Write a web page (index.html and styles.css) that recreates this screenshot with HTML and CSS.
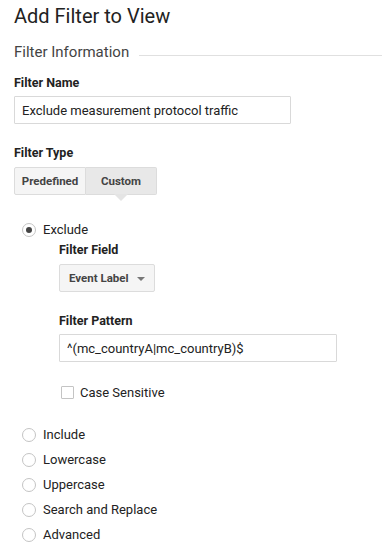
FILE: index.html
```html
<!DOCTYPE html>
<html lang="en">
<head>
  <meta charset="UTF-8" />
  <title>Add Filter to View</title>
  <link rel="stylesheet" href="styles.css">
</head>
<body>

  <h1 class="page-title">Add Filter to View</h1>

  <!-- Section header -->
  <div class="section-head">
    <span>Filter Information</span>
    <div class="section-rule"></div>
  </div>

  <div class="field-label">Filter Name</div>
  <input class="text-input name-input" type="text" value="Exclude measurement protocol traffic" />

  <div class="field-label type-label">Filter Type</div>
  <div class="btn-group">
    <button class="seg-btn">Predefined</button>
    <button class="seg-btn active">Custom</button>
  </div>

  <!-- Custom filter options -->
  <div class="option-list">
    <div class="option first">
      <span class="radio checked"></span>
      <span>Exclude</span>
    </div>

    <div class="sub-form">
      <div class="field-label sub-first">Filter Field</div>
      <div class="select-box">
        <span>Event Label</span>
        <span class="caret"></span>
      </div>

      <div class="field-label pattern-label">Filter Pattern</div>
      <input class="text-input pattern-input" type="text" value="^(mc_countryA|mc_countryB)$" />

      <div class="check-row">
        <span class="checkbox"></span>
        <span>Case Sensitive</span>
      </div>
    </div>

    <div class="option spaced">
      <span class="radio"></span>
      <span>Include</span>
    </div>
    <div class="option">
      <span class="radio"></span>
      <span>Lowercase</span>
    </div>
    <div class="option">
      <span class="radio"></span>
      <span>Uppercase</span>
    </div>
    <div class="option">
      <span class="radio"></span>
      <span>Search and Replace</span>
    </div>
    <div class="option">
      <span class="radio"></span>
      <span>Advanced</span>
    </div>
  </div>

</body>
</html>
```

FILE: styles.css
```css
/* Reset */
* { margin: 0; padding: 0; box-sizing: border-box; }

body {
  font-family: Roboto, 'Liberation Sans', sans-serif;
  color: #222;
  background: #fff;
  padding: 0 0 0 14px;
  font-size: 13px;
  overflow: hidden;
}

.page-title {
  font-size: 20px;
  font-weight: normal;
  line-height: 24px;
  padding-top: 4px;
  color: #222;
}

/* Section header with rule */
.section-head {
  display: flex;
  align-items: center;
  margin-top: 14px;
  font-size: 15px;
  line-height: 20px;
  color: #444;
}
.section-rule {
  flex: 1;
  margin-left: 10px;
  margin-top: 6px;
  border-top: 1px solid #e0e0e0;
}

.field-label {
  font-size: 12.5px;
  font-weight: bold;
  line-height: 16px;
  color: #222;
  margin-top: 13px;
}
.type-label { margin-top: 21px; }

.text-input {
  display: block;
  height: 28px;
  border: 1px solid #d9d9d9;
  border-radius: 1px;
  padding: 0 7px;
  font-family: inherit;
  font-size: 13px;
  color: #222;
  outline: none;
  margin-top: 5px;
}
.name-input { width: 277px; }
.pattern-input { width: 278px; }

/* Segmented buttons */
.btn-group {
  display: flex;
  margin-top: 6px;
  width: 143px;
}
.seg-btn {
  position: relative;
  height: 28px;
  width: 72px;
  border: 1px solid #dcdcdc;
  background: #f5f5f5;
  font-family: inherit;
  font-size: 11.5px;
  font-weight: bold;
  color: #444;
}
.seg-btn:first-child { border-radius: 2px 0 0 2px; }
.seg-btn + .seg-btn { border-left: none; width: 71px; border-radius: 0 2px 2px 0; }
.seg-btn.active { background: #e8e8e8; }
.seg-btn.active::after {
  content: '';
  position: absolute;
  left: 50%;
  top: 100%;
  margin-left: -7px;
  border-left: 7px solid transparent;
  border-right: 7px solid transparent;
  border-top: 7px solid #e4e4e4;
}

/* Radio options */
.option-list { padding-left: 8px; }
.option {
  display: flex;
  align-items: center;
  gap: 7px;
  height: 25px;
  color: #222;
}
.option.first { margin-top: 22px; }
.option.spaced { margin-top: 20px; }

.radio {
  width: 14px;
  height: 14px;
  border: 1px solid #c4c4c4;
  border-radius: 50%;
  background: #fff;
  display: flex;
  align-items: center;
  justify-content: center;
}
.radio.checked::after {
  content: '';
  width: 6px;
  height: 6px;
  border-radius: 50%;
  background: #444;
}

.sub-form { padding-left: 37px; }
.sub-first { margin-top: 0; }
.pattern-label { margin-top: 21px; }

.select-box {
  display: flex;
  align-items: center;
  justify-content: space-between;
  width: 96px;
  height: 28px;
  margin-top: 6px;
  padding: 0 9px 0 9px;
  background: #f5f5f5;
  border: 1px solid #dcdcdc;
  border-radius: 2px;
  font-size: 11.5px;
  font-weight: bold;
  color: #444;
}
.caret {
  border-left: 4px solid transparent;
  border-right: 4px solid transparent;
  border-top: 4px solid #777;
  margin-top: 2px;
}

.check-row {
  display: flex;
  align-items: center;
  gap: 6px;
  height: 20px;
  margin-top: 20px;
  padding-left: 2px;
}
.checkbox {
  width: 13px;
  height: 13px;
  border: 1px solid #c4c4c4;
  border-radius: 1px;
  background: #fff;
}
```
